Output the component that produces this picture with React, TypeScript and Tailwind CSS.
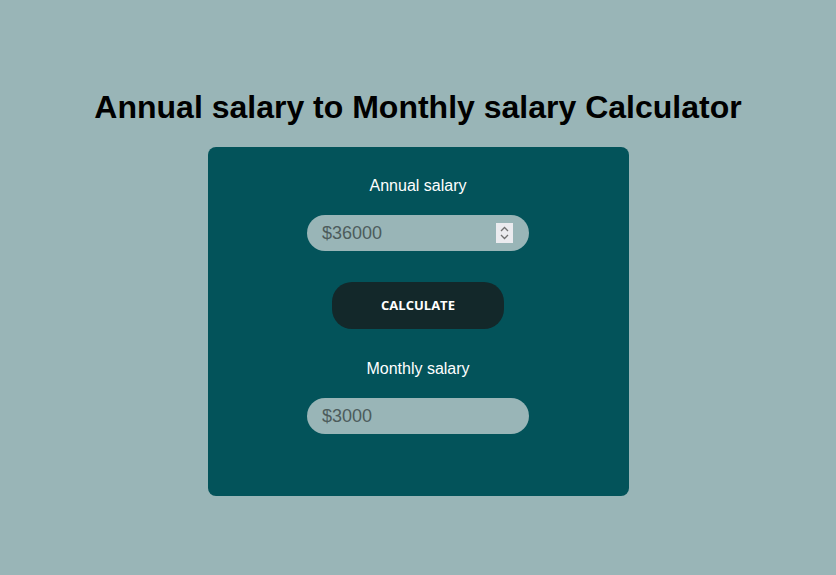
import React from "react";

export default function App() {
  return (
    <div className="min-h-[575px] w-full bg-[#99b5b7] flex flex-col items-center pt-[89px]" style={{ fontFamily: '"Liberation Sans", Arial, sans-serif' }}>
      <h1 className="text-[32px] leading-[37px] font-bold text-black mb-[21px]">Annual salary to Monthly salary Calculator</h1>
      <div className="w-[421px] h-[349px] bg-[#03535a] rounded-[8px] flex flex-col items-center pt-[30px]">
        <div className="text-white text-[16px] leading-[18px]">Annual salary</div>
        <div className="relative mt-[20px] w-[222px] h-[36px] rounded-full bg-[#99b5b7] flex items-center pl-[15px]">
          <span className="text-[18px] text-[#4d5c5c]">$36000</span>
          <div className="absolute left-[189px] top-[8px] w-[17px] h-[20px] bg-[#ebebef] flex flex-col items-center justify-center gap-[2px]">
            <svg width="9" height="6" viewBox="0 0 9 6"><path d="M1 5 L4.5 1.5 L8 5" stroke="#707070" strokeWidth="1.3" fill="none" /></svg>
            <svg width="9" height="6" viewBox="0 0 9 6"><path d="M1 1 L4.5 4.5 L8 1" stroke="#707070" strokeWidth="1.3" fill="none" /></svg>
          </div>
        </div>
        <button className="mt-[31px] w-[172px] h-[47px] rounded-[20px] bg-[#13282a] text-white text-[13px] font-bold" style={{ fontFamily: '"Open Sans", sans-serif' }}>CALCULATE</button>
        <div className="mt-[31px] text-white text-[16px] leading-[18px]">Monthly salary</div>
        <div className="mt-[20px] w-[222px] h-[36px] rounded-full bg-[#99b5b7] flex items-center pl-[15px]">
          <span className="text-[18px] text-[#4d5c5c]">$3000</span>
        </div>
      </div>
    </div>
  );
}
